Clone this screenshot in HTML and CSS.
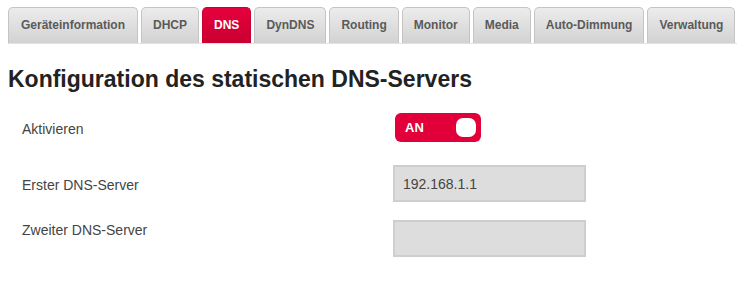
FILE: index.html
```html
<!DOCTYPE html>
<html lang="de">
<head>
    <meta charset="UTF-8">
    <meta name="viewport" content="width=device-width, initial-scale=1.0">
    <title>DNS</title>
    <link rel="stylesheet" href="styles.css">
</head>
<body>
    <ul class="tabs">
        <li class="tab">Geräteinformation</li>
        <li class="tab">DHCP</li>
        <li class="tab active">DNS</li>
        <li class="tab">DynDNS</li>
        <li class="tab">Routing</li>
        <li class="tab">Monitor</li>
        <li class="tab">Media</li>
        <li class="tab">Auto-Dimmung</li>
        <li class="tab">Verwaltung</li>
    </ul>

    <h1>Konfiguration des statischen DNS-Servers</h1>

    <div class="form">
        <div class="row row-toggle">
            <label class="label">Aktivieren</label>
            <div class="switch">
                <span class="switch-text">AN</span>
                <span class="knob"></span>
            </div>
        </div>
        <div class="row row-first">
            <label class="label">Erster DNS-Server</label>
            <input class="field" type="text" value="192.168.1.1">
        </div>
        <div class="row row-second">
            <label class="label label-top">Zweiter DNS-Server</label>
            <input class="field" type="text" value="">
        </div>
    </div>
</body>
</html>
```

FILE: styles.css
```css
body {
    font-family: "Liberation Sans", Arial, sans-serif;
    margin: 0;
    padding: 7px 3px 0 8px;
    background: #fff;
    color: #444;
}
.tabs {
    list-style: none;
    margin: 0;
    padding: 0;
    display: flex;
    gap: 3px;
    border-bottom: 1px solid #e2e2e2;
}
.tab {
    flex: none;
    white-space: nowrap;
    height: 35px;
    line-height: 35px;
    padding: 0 11px;
    font-size: 12px;
    font-weight: bold;
    color: #5a5a5a;
    background: linear-gradient(#ececec, #d2d2d2);
    border: 1px solid #c4c4c4;
    border-bottom: none;
    border-radius: 5px 5px 0 0;
}
.tab:first-child {
    padding: 0 12px;
}
.tab.active {
    color: #fff;
    background: linear-gradient(#e6003e, #c9002f);
    border-color: #c9002f;
}
h1 {
    font-size: 23px;
    line-height: 28px;
    color: #222;
    margin: 21px 0 0 0;
}
.form {
    padding-left: 14px;
    margin-top: 20px;
}
.row {
    display: flex;
    align-items: center;
}
.label {
    width: 371px;
    font-size: 14px;
    line-height: 16px;
    padding-top: 3px;
    color: #444;
}
.label-top {
    align-self: flex-start;
    padding-top: 2px;
}
.row-first {
    margin-top: 23px;
}
.row-second {
    margin-top: 18px;
}
.switch {
    margin-left: 2px;
    width: 86px;
    height: 29px;
    border-radius: 6px;
    background: #e2003a;
    display: flex;
    align-items: center;
    justify-content: space-between;
    padding: 0 5px 0 10px;
    box-sizing: border-box;
}
.switch-text {
    color: #fff;
    font-size: 13px;
    font-weight: bold;
}
.knob {
    width: 20px;
    height: 19px;
    border-radius: 7px;
    background: #fff;
}
.field {
    width: 193px;
    height: 37px;
    box-sizing: border-box;
    border: 2px solid #cecece;
    background: #dddddd;
    padding: 0 8px;
    font-family: "Liberation Sans", Arial, sans-serif;
    font-size: 14px;
    color: #444;
    margin: 0;
}
```
